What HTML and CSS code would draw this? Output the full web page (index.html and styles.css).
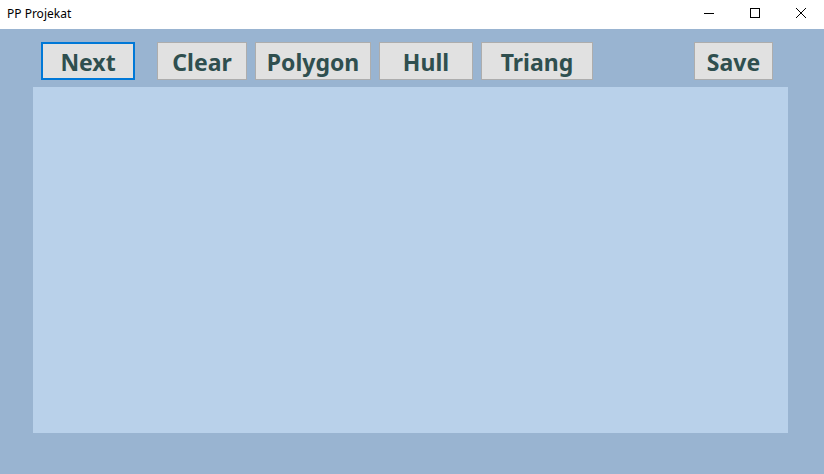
FILE: index.html
```html
<!DOCTYPE html>
<html>
<head>
<meta charset="utf-8">
<link rel="stylesheet" href="styles.css">
</head>
<body>
<div class="window">
  <div class="titlebar">
    <span class="title">PP Projekat</span>
    <div class="caption-buttons">
      <div class="cap-btn"><svg width="10" height="10" viewBox="0 0 10 10"><path d="M0 5.5H10" stroke="#000" stroke-width="1"/></svg></div>
      <div class="cap-btn"><svg width="10" height="10" viewBox="0 0 10 10"><rect x="0.5" y="0.5" width="9" height="9" fill="none" stroke="#000" stroke-width="1"/></svg></div>
      <div class="cap-btn"><svg width="10" height="10" viewBox="0 0 10 10"><path d="M0 0L10 10M10 0L0 10" stroke="#000" stroke-width="1"/></svg></div>
    </div>
  </div>
  <div class="client">
    <div class="toolbar">
      <button class="btn btn-next focused">Next</button>
      <button class="btn btn-clear">Clear</button>
      <button class="btn btn-polygon">Polygon</button>
      <button class="btn btn-hull">Hull</button>
      <button class="btn btn-triang">Triang</button>
      <button class="btn btn-save">Save</button>
    </div>
    <div class="canvas"></div>
  </div>
</div>
</body>
</html>
```
FILE: styles.css
```css
html, body {
  margin: 0;
  padding: 0;
  width: 824px;
  height: 474px;
  overflow: hidden;
}
.window {
  display: flex;
  flex-direction: column;
  width: 824px;
  height: 474px;
  background: #99b4d1;
}
.titlebar {
  height: 29px;
  background: #ffffff;
  display: flex;
  align-items: center;
  justify-content: space-between;
  flex-shrink: 0;
}
.title {
  font-family: "Noto Sans", "Open Sans", sans-serif;
  font-size: 12px;
  color: #000;
  padding-left: 7px;
  padding-bottom: 2px;
}
.caption-buttons {
  display: flex;
  height: 29px;
}
.cap-btn {
  width: 46px;
  height: 29px;
  display: flex;
  align-items: center;
  justify-content: center;
  padding-bottom: 3px;
  box-sizing: border-box;
}
.client {
  flex: 1;
  display: flex;
  flex-direction: column;
}
.toolbar {
  display: flex;
  margin-top: 13px;
  height: 38px;
}
.btn {
  box-sizing: border-box;
  height: 38px;
  margin: 0;
  padding: 2px 0 0 0;
  background: #e1e1e1;
  border: 1px solid #adadad;
  font-family: "Noto Sans", "Open Sans", sans-serif;
  font-weight: 700;
  font-size: 23px;
  color: #2f4f4f;
  display: flex;
  align-items: center;
  justify-content: center;
  line-height: 1;
}
.btn.focused {
  border: 2px solid #0078d7;
}
.btn-next { margin-left: 41px; width: 94px; }
.btn-clear { margin-left: 22px; width: 90px; }
.btn-polygon { margin-left: 8px; width: 116px; }
.btn-hull { margin-left: 8px; width: 94px; }
.btn-triang { margin-left: 8px; width: 112px; }
.btn-save { margin-left: 101px; width: 79px; }
.canvas {
  margin-top: 7px;
  margin-left: 33px;
  width: 755px;
  height: 346px;
  background: #b9d1ea;
}
```
